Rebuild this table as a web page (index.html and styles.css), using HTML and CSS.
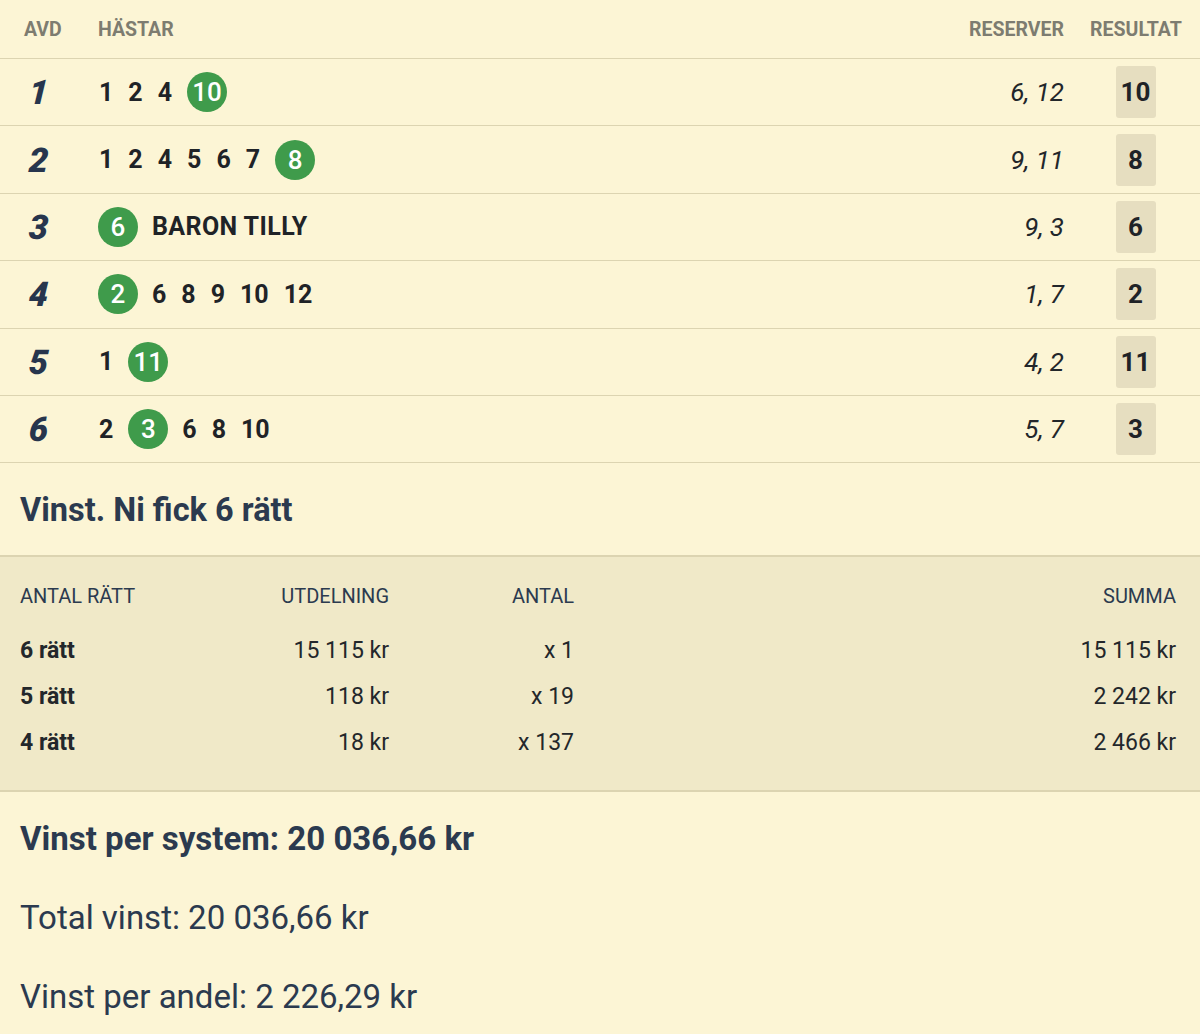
FILE: index.html
```html
<!DOCTYPE html>
<html lang="sv">
<head>
<meta charset="utf-8">
<link rel="stylesheet" href="styles.css">
</head>
<body>
<div class="page">
  <div class="hdr">
    <div class="c-avd">AVD</div>
    <div class="c-horses">HÄSTAR</div>
    <div class="c-res">RESERVER</div>
    <div class="c-result">RESULTAT</div>
  </div>

  <div class="row">
    <div class="c-avd avd">1</div>
    <div class="c-horses horses"><span class="h">1</span><span class="h">2</span><span class="h">4</span><span class="win">10</span></div>
    <div class="c-res res">6, 12</div>
    <div class="c-result"><span class="rbox">10</span></div>
  </div>
  <div class="row">
    <div class="c-avd avd">2</div>
    <div class="c-horses horses"><span class="h">1</span><span class="h">2</span><span class="h">4</span><span class="h">5</span><span class="h">6</span><span class="h">7</span><span class="win">8</span></div>
    <div class="c-res res">9, 11</div>
    <div class="c-result"><span class="rbox">8</span></div>
  </div>
  <div class="row">
    <div class="c-avd avd">3</div>
    <div class="c-horses horses"><span class="win">6</span><span class="h name">BARON TILLY</span></div>
    <div class="c-res res">9, 3</div>
    <div class="c-result"><span class="rbox">6</span></div>
  </div>
  <div class="row">
    <div class="c-avd avd">4</div>
    <div class="c-horses horses"><span class="win">2</span><span class="h">6</span><span class="h">8</span><span class="h">9</span><span class="h">10</span><span class="h">12</span></div>
    <div class="c-res res">1, 7</div>
    <div class="c-result"><span class="rbox">2</span></div>
  </div>
  <div class="row">
    <div class="c-avd avd">5</div>
    <div class="c-horses horses"><span class="h">1</span><span class="win">11</span></div>
    <div class="c-res res">4, 2</div>
    <div class="c-result"><span class="rbox">11</span></div>
  </div>
  <div class="row">
    <div class="c-avd avd">6</div>
    <div class="c-horses horses"><span class="h">2</span><span class="win">3</span><span class="h">6</span><span class="h">8</span><span class="h">10</span></div>
    <div class="c-res res">5, 7</div>
    <div class="c-result"><span class="rbox">3</span></div>
  </div>

  <h2 class="title">Vinst. Ni fick 6 rätt</h2>

  <div class="payout">
    <div class="prow phead">
      <div class="p1">ANTAL RÄTT</div>
      <div class="p2">UTDELNING</div>
      <div class="p3">ANTAL</div>
      <div class="p4">SUMMA</div>
    </div>
    <div class="prow">
      <div class="p1 b">6 rätt</div>
      <div class="p2">15 115 kr</div>
      <div class="p3">x 1</div>
      <div class="p4">15 115 kr</div>
    </div>
    <div class="prow">
      <div class="p1 b">5 rätt</div>
      <div class="p2">118 kr</div>
      <div class="p3">x 19</div>
      <div class="p4">2 242 kr</div>
    </div>
    <div class="prow">
      <div class="p1 b">4 rätt</div>
      <div class="p2">18 kr</div>
      <div class="p3">x 137</div>
      <div class="p4">2 466 kr</div>
    </div>
  </div>

  <div class="summary">
    <div class="sys">Vinst per system: 20 036,66 kr</div>
    <div class="line">Total vinst: 20 036,66 kr</div>
    <div class="line">Vinst per andel: 2 226,29 kr</div>
  </div>
</div>
</body>
</html>
```

FILE: styles.css
```css
html, body {
  margin: 0;
  padding: 0;
  background: #fcf5d5;
}
body {
  font-family: Roboto, "Liberation Sans", sans-serif;
  color: #2b3a4f;
  width: 1200px;
}
.page {
  display: flex;
  flex-direction: column;
}
.hdr, .row {
  display: flex;
  align-items: center;
  border-bottom: 1px solid #dcd4b1;
}
.hdr {
  height: 58px;
  font-size: 19.5px;
  font-weight: 700;
  color: #7d7c70;
}
.row {
  height: 66.4px;
}
.c-avd {
  width: 98px;
  padding-left: 24px;
  box-sizing: border-box;
  flex: none;
}
.c-horses {
  flex: 1;
}
.c-res {
  width: 200px;
  text-align: right;
  flex: none;
}
.c-result {
  width: 136px;
  display: flex;
  justify-content: center;
  flex: none;
  padding-left: 7px;
  box-sizing: border-box;
}
.hdr .c-result {
  padding-left: 8px;
}
.avd {
  font-size: 34px;
  font-weight: 900;
  font-style: italic;
  color: #27354d;
  padding-left: 29px;
  transform: skewX(-4deg);
}
.horses {
  display: flex;
  align-items: center;
  gap: 13px;
  font-size: 25px;
  font-weight: 700;
  color: #1f2327;
}
.h {
  padding: 0 1px;
}
.h + .win {
  margin-left: 1px;
}
.name {
  letter-spacing: 0.4px;
}
.win {
  width: 40px;
  height: 40px;
  border-radius: 50%;
  background: #3f9b4b;
  color: #fff;
  display: flex;
  align-items: center;
  justify-content: center;
  font-size: 26px;
  font-weight: 500;
}
.res {
  font-size: 26px;
  font-style: italic;
  color: #22262a;
}
.rbox {
  width: 40px;
  height: 52px;
  background: #e6dec0;
  border-radius: 3px;
  display: flex;
  align-items: center;
  justify-content: center;
  font-size: 26px;
  font-weight: 700;
  color: #1f2327;
}
.title {
  margin: 0;
  height: 94px;
  display: flex;
  align-items: center;
  padding-left: 20px;
  padding-top: 1px;
  box-sizing: border-box;
  font-size: 32.5px;
  font-weight: 700;
  border-bottom: 2px solid #dcd4b1;
}
.payout {
  background: #f0e9c8;
  padding: 21px 24px 25px 20px;
  border-bottom: 2px solid #dcd4b1;
  display: flex;
  flex-direction: column;
}
.prow {
  display: flex;
  height: 46px;
  align-items: center;
  font-size: 23px;
  color: #23272b;
}
.phead {
  height: 36px;
  margin-bottom: 13px;
  font-size: 20px;
  color: #2b3a4f;
}
.p1 { width: 180px; }
.p2 { width: 189px; text-align: right; }
.p3 { width: 185px; text-align: right; }
.p4 { flex: 1; text-align: right; }
.b { font-weight: 700; }
.summary {
  padding: 22px 20px 0 20px;
  display: flex;
  flex-direction: column;
}
.sys {
  height: 48px;
  display: flex;
  align-items: center;
  font-size: 33px;
  font-weight: 700;
  margin-bottom: 31px;
}
.line {
  height: 48px;
  display: flex;
  align-items: center;
  font-size: 33px;
  margin-bottom: 31px;
}
```
